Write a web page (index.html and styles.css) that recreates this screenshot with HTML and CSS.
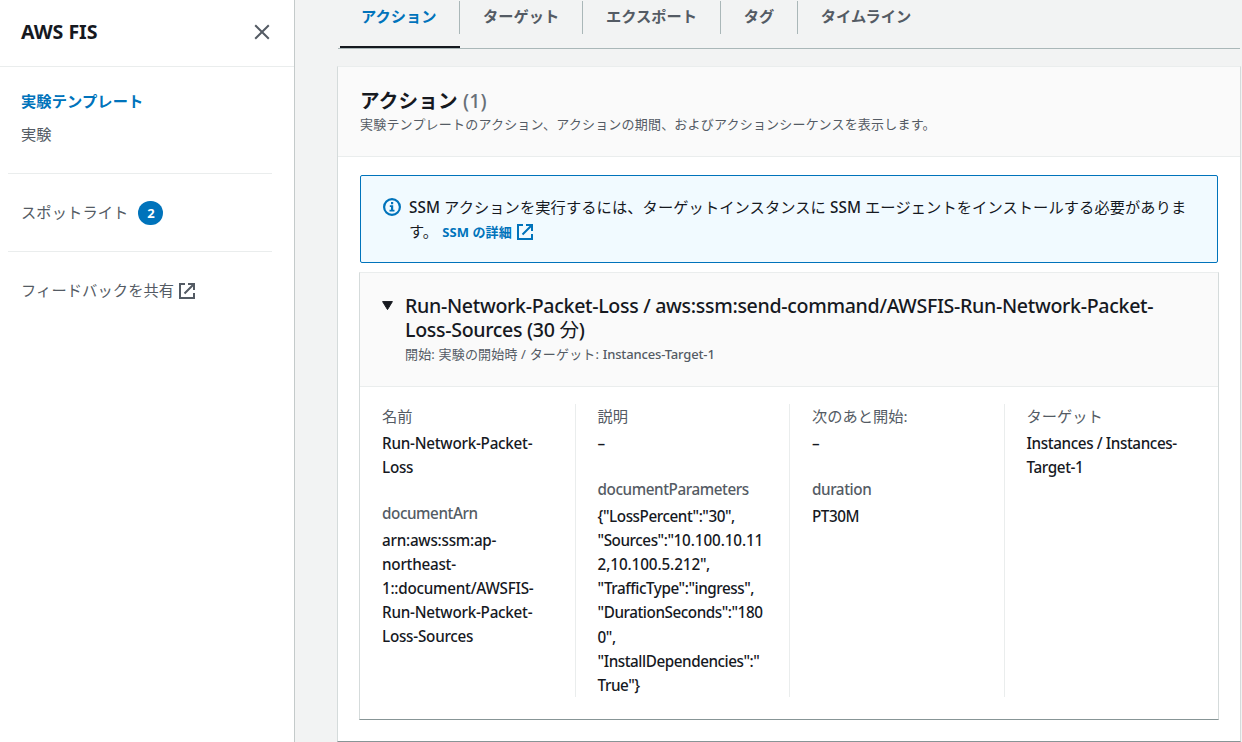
FILE: index.html
```html
<!DOCTYPE html>
<html lang="ja">
<head>
<meta charset="utf-8">
<title>AWS FIS</title>
<link rel="stylesheet" href="styles.css">
</head>
<body>
<div class="app">
  <nav class="sidebar">
    <div class="sidebar-header">
      <h2 class="sidebar-title">AWS FIS</h2>
      <svg class="close" width="16" height="16" viewBox="0 0 16 16"><path d="M1.2 1.2 14.8 14.8M14.8 1.2 1.2 14.8" fill="none" stroke="#545b64" stroke-width="2"/></svg>
    </div>
    <div class="nav-group nav-main">
      <a class="nav-link active">実験テンプレート</a>
      <a class="nav-link">実験</a>
    </div>
    <div class="nav-group nav-single">
      <a class="nav-link">スポットライト</a><span class="badge">2</span>
    </div>
    <div class="nav-group nav-single">
      <a class="nav-link">フィードバックを共有</a>
      <svg class="external" width="16" height="16" viewBox="0 0 16 16" fill="none" stroke="#545b64" stroke-width="2"><path d="M6 1H1V15H15V10M9 1H15V7M14.5 1.5 5.5 10.5"/></svg>
    </div>
  </nav>
  <main class="content">
    <div class="tabs">
      <div class="tab selected"><span>アクション</span></div>
      <div class="tab"><span>ターゲット</span></div>
      <div class="tab"><span>エクスポート</span></div>
      <div class="tab"><span>タグ</span></div>
      <div class="tab"><span>タイムライン</span></div>
    </div>
    <section class="panel">
      <header class="panel-header">
        <h2 class="panel-title">アクション <span class="count">(1)</span></h2>
        <p class="description">実験テンプレートのアクション、アクションの期間、およびアクションシーケンスを表示します。</p>
      </header>
      <div class="panel-body">
        <div class="alert">
          <svg class="info" width="18" height="18" viewBox="0 0 18 18"><circle cx="9" cy="9" r="7.9" fill="none" stroke="#0073bb" stroke-width="2.2"/><path d="M8 4h2.2v2.2H8zM6.8 7.3h3.4v4.4h1.3v1.8H6.5v-1.8H8V9H6.8z" fill="#0073bb"/></svg>
          <p class="alert-text"><span class="latin">SSM</span> アクションを実行するには、ターゲットインスタンスに <span class="latin">SSM</span> エージェントをインストールする必要がありま<br>す。 <a class="alert-link">SSM の詳細 <svg class="external" width="16" height="16" viewBox="0 0 16 16" fill="none" stroke="#0073bb" stroke-width="2"><path d="M6 1H1V15H15V10M9 1H15V7M14.5 1.5 5.5 10.5"/></svg></a></p>
        </div>
        <section class="card">
          <header class="card-header">
            <svg class="caret" width="11" height="9" viewBox="0 0 11 9"><path d="M.6.6h9.8L5.5 8.6z" fill="#16191f" stroke="#16191f" stroke-linejoin="round"/></svg>
            <div>
              <h3 class="card-title">Run-Network-Packet-Loss / aws:ssm:send-command/AWSFIS-Run-Network-Packet-<br>Loss-Sources (30 <span class="unit">分</span>)</h3>
              <p class="card-sub">開始: 実験の開始時 / ターゲット: <span class="target">Instances-Target-1</span></p>
            </div>
          </header>
          <div class="columns">
            <dl class="column">
              <dt>名前</dt>
              <dd>Run-Network-Packet-<br>Loss</dd>
              <dt class="param">documentArn</dt>
              <dd class="arn">arn:aws:ssm:ap-<br>northeast-<br>1::document/AWSFIS-<br>Run-Network-Packet-<br>Loss-Sources</dd>
            </dl>
            <dl class="column">
              <dt>説明</dt>
              <dd>–</dd>
              <dt class="param">documentParameters</dt>
              <dd class="compact">{"LossPercent":"30",<br>"Sources":"<span class="digits">10.100.10.11</span><br><span class="digits">2,10.100.5.212</span>",<br>"TrafficType":"ingress",<br>"DurationSeconds":"180<br>0",<br>"InstallDependencies":"<br>True"}</dd>
            </dl>
            <dl class="column">
              <dt>次のあと開始:</dt>
              <dd>–</dd>
              <dt class="param">duration</dt>
              <dd class="compact">PT30M</dd>
            </dl>
            <dl class="column">
              <dt>ターゲット</dt>
              <dd class="target-value">Instances / Instances-<br>Target-1</dd>
            </dl>
          </div>
        </section>
      </div>
    </section>
  </main>
</div>
</body>
</html>
```
FILE: styles.css
```css
* { box-sizing: border-box; }
html, body { height: 100%; margin: 0; overflow: hidden; }
body {
  font-family: "Noto Sans", "Noto Sans CJK JP", sans-serif;
  font-size: 15.25px;
  line-height: 24.2px;
  color: #16191f;
  background: #f2f3f3;
}
h2, h3, p, dl, dt, dd { margin: 0; }
svg { display: block; flex: none; }
.app { display: flex; height: 742px; }
.sidebar { width: 295px; flex: none; background: #fff; border-right: 1px solid #c4caca; }
.sidebar-header {
  display: flex; align-items: center; justify-content: space-between;
  height: 67px; padding: 0 24px 3px 21px; border-bottom: 1px solid #eaeded;
}
.sidebar-title { margin-top: 1px; font-size: 19.6px; letter-spacing: -0.05px; }
.nav-group { margin: 0 22px 0 8px; padding-left: 13px; color: #545b64; white-space: nowrap; letter-spacing: 0.1px; }
.nav-group + .nav-group { border-top: 1px solid #eaeded; }
.nav-main { display: flex; flex-direction: column; gap: 9px; height: 106px; padding-top: 21.5px; }
.nav-single { display: flex; align-items: center; height: 78px; }
.nav-single .nav-link { margin-top: -1px; }
.active { color: #0073bb; font-weight: 700; }
.badge {
  width: 25px; height: 24px; margin-left: 10px; border-radius: 12px;
  background: #0073bb; color: #fff; font-size: 13px; font-weight: 700; text-align: center;
}
.nav-group .external { margin-left: 5px; margin-top: 1px; }
.content { flex: 1; min-width: 0; padding: 0 1px 0 42px; }
.tabs { display: flex; height: 49px; margin: 0 1px 0 1px; padding-left: 2px; border-bottom: 1px solid #aab7b8; }
.tab { height: 48px; padding-top: 1px; color: #545b64; font-weight: 700; white-space: nowrap; }
.tab span { display: block; height: 33px; padding: 3px 22.7px 0 23px; border-right: 1px solid #aab7b8; }
.tab:first-child span { padding-left: 21px; padding-right: 22px; }
.tab:last-child span { border-right: 0; }
.tab.selected { width: 120px; color: #0073bb; box-shadow: inset 0 -2px #16191f; }
.panel {
  height: 676px; margin-top: 17px; background: #fff;
  border: 1px solid #d5dbdb; border-top-color: #eaeded; border-bottom-color: #879596;
}
.panel-header { height: 90px; padding: 22px 22px 0; background: #fafafa; border-bottom: 1px solid #eaeded; }
.panel-title { font-size: 19.6px; line-height: 24px; letter-spacing: 0.15px; }
.count { color: #687078; font-weight: 500; }
.description { margin-top: -1px; font-size: 13px; line-height: 24px; letter-spacing: 0.2px; color: #545b64; }
.panel-body { padding: 18px 21px 0; }
.alert {
  display: flex; gap: 8px; height: 88px; margin: 0 1px 9px; padding: 19px 22px 0;
  background: #f1faff; border: 1px solid #0073bb; border-radius: 2px;
}
.info { margin-top: 3px; }
.alert-text { white-space: nowrap; letter-spacing: 0.08px; }
.latin { font-weight: 500; }
.alert-link { display: inline-flex; align-items: center; gap: 5px; font-size: 13px; font-weight: 700; color: #0073bb; }
.card {
  height: 448px; border: 1px solid #d5dbdb;
  border-top-color: #eaeded; border-bottom-color: #879596;
}
.card-header { display: flex; gap: 12px; height: 114px; padding: 21px 22px 0; background: #fafafa; border-bottom: 1px solid #eaeded; }
.caret { margin-top: 7px; }
.card-title { font-size: 19.6px; line-height: 24px; font-weight: 500; letter-spacing: -0.32px; white-space: nowrap; }
.unit { font-weight: 400; }
.card-sub { font-size: 13px; color: #545b64; letter-spacing: 0.17px; white-space: nowrap; }
.target { font-weight: 500; letter-spacing: -0.15px; }
.columns { display: grid; grid-template-columns: 216px 214px 215px 1fr; height: 293px; margin-top: 17px; }
.column { padding-left: 22px; white-space: nowrap; }
.column:nth-child(even) { padding-left: 21.6px; }
.column:not(:last-child) { border-right: 1px solid #eaeded; }
dt { color: #545b64; }
dt.param { font-weight: 500; letter-spacing: -0.43px; }
dd { font-weight: 500; margin-top: 3px; line-height: 24.1px; letter-spacing: -0.25px; }
.arn { margin-top: 2.5px; }
.compact { margin-top: 2px; line-height: 24.2px; letter-spacing: -0.45px; }
.digits { letter-spacing: -0.1px; }
.target-value { letter-spacing: -0.4px; }
dd + dt { margin-top: 22px; }
```
